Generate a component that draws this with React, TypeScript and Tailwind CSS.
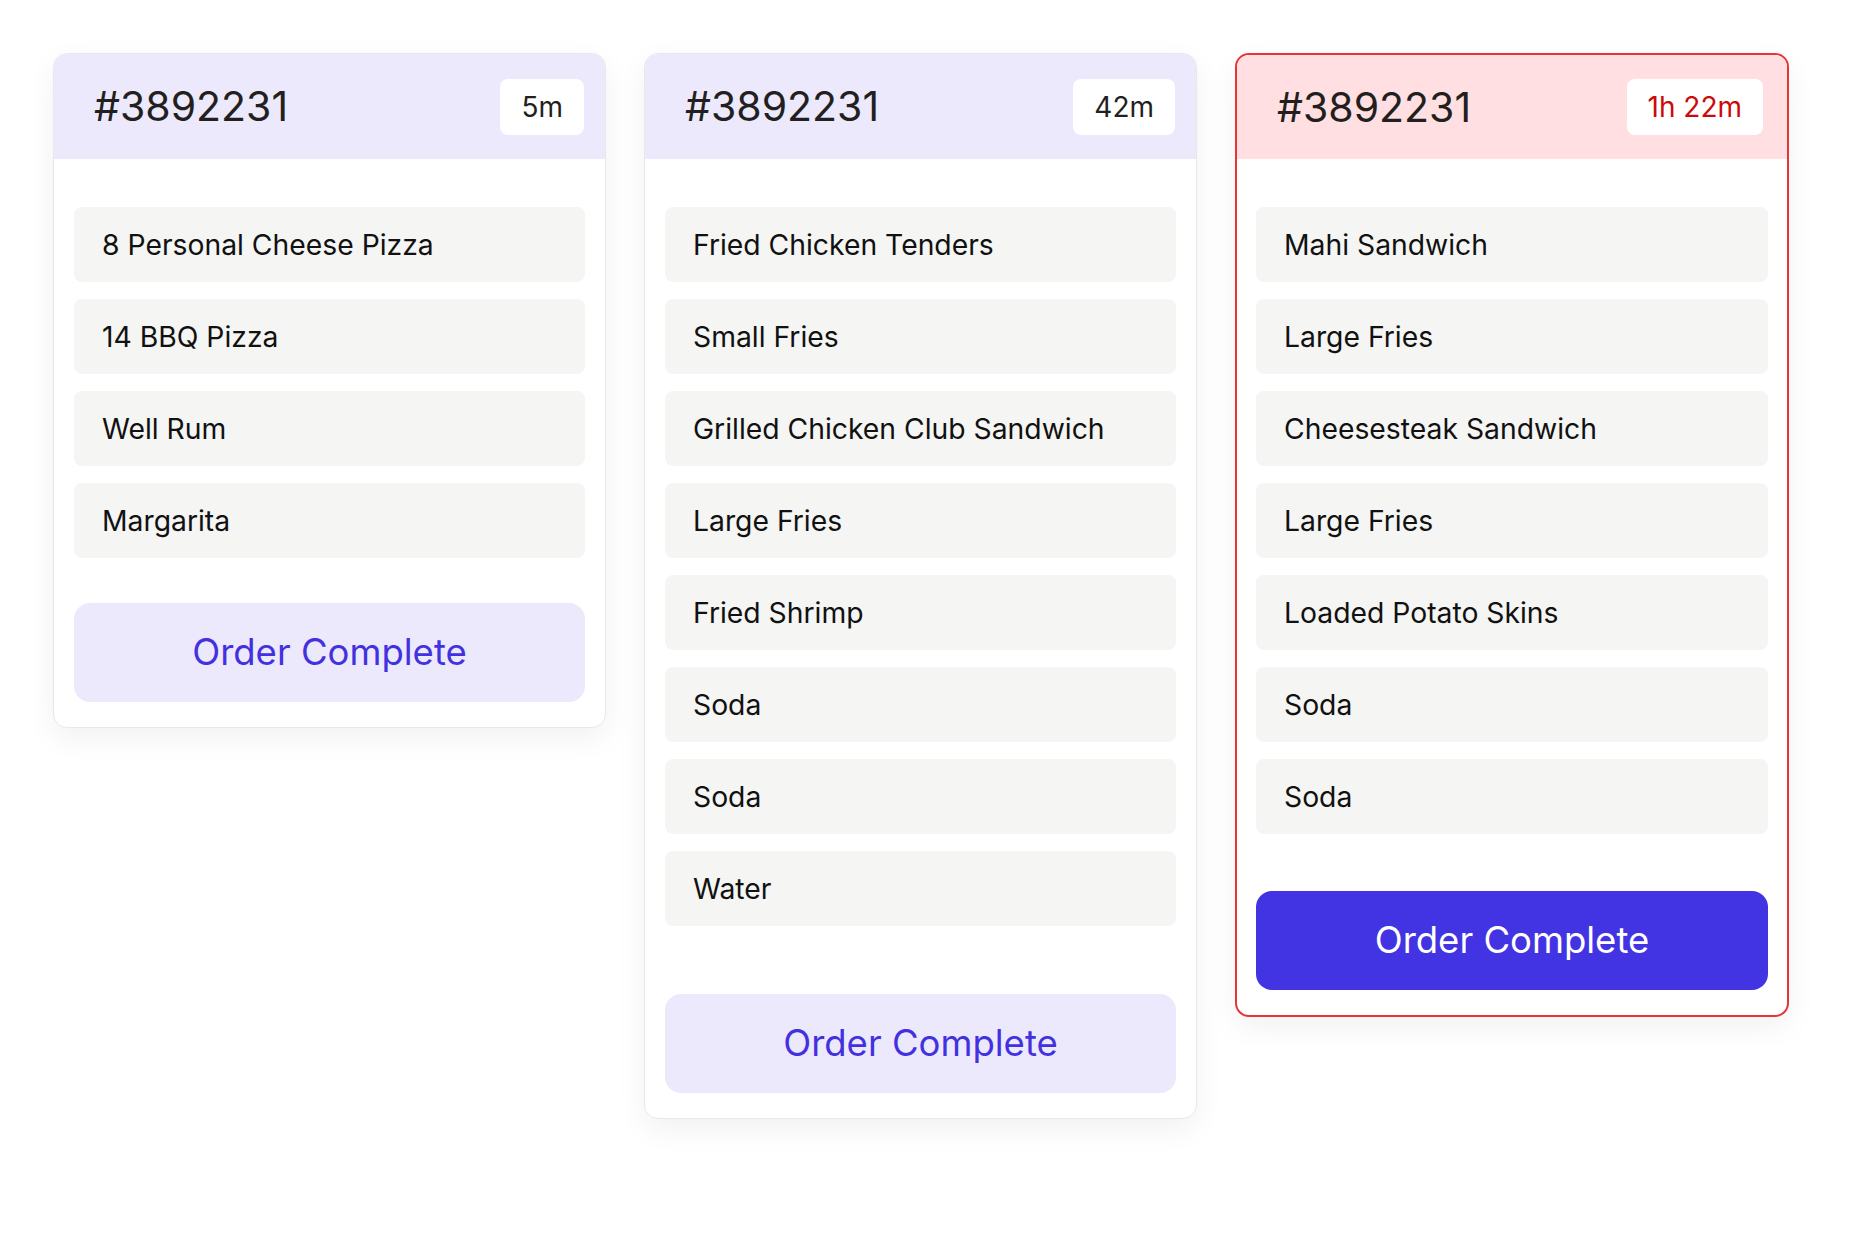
import React from "react";

type Order = {
  id: string;
  time: string;
  items: string[];
  urgent?: boolean;
  gap: string;
};

const orders: Order[] = [
  {
    id: "#3892231",
    time: "5m",
    items: ["8 Personal Cheese Pizza", "14 BBQ Pizza", "Well Rum", "Margarita"],
    gap: "mt-[45px]",
  },
  {
    id: "#3892231",
    time: "42m",
    items: [
      "Fried Chicken Tenders",
      "Small Fries",
      "Grilled Chicken Club Sandwich",
      "Large Fries",
      "Fried Shrimp",
      "Soda",
      "Soda",
      "Water",
    ],
    gap: "mt-[68px]",
  },
  {
    id: "#3892231",
    time: "1h 22m",
    urgent: true,
    items: [
      "Mahi Sandwich",
      "Large Fries",
      "Cheesesteak Sandwich",
      "Large Fries",
      "Loaded Potato Skins",
      "Soda",
      "Soda",
    ],
    gap: "mt-[57px]",
  },
];

function Card({ order }: { order: Order }) {
  const u = order.urgent;
  return (
    <div
      className={
        "overflow-hidden rounded-[14px] bg-white shadow-[0_10px_30px_rgba(0,0,0,0.06)] " +
        (u ? "w-[554px] border-2 border-[#e53535]" : "w-[553px] border border-[#e8e8e8]")
      }
    >
      <div
        className={
          "flex items-center justify-between pl-[40px] " +
          (u ? "h-[104px] bg-[#ffdfe1] pr-[24px]" : "h-[105px] bg-[#ece9fc] pr-[21px]")
        }
      >
        <span className="text-[41px] leading-none text-[#231f1e]">{order.id}</span>
        <span
          className={
            "flex h-[56px] items-center rounded-[8px] bg-white px-[21px] text-[28px] leading-none " +
            (u ? "text-[#cc0a0a]" : "text-[#231f1e]")
          }
        >
          {order.time}
        </span>
      </div>
      <div className={"flex flex-col pb-[25px] pt-[48px] " + (u ? "px-[19px]" : "px-[20px]")}>
        <div className="flex flex-col gap-[17px]">
          {order.items.map((it, i) => (
            <div
              key={i}
              className="flex h-[75px] items-center rounded-[8px] bg-[#f5f5f4] pl-[28px] pt-[2px] text-[28.3px] leading-none text-[#111111]"
            >
              {it}
            </div>
          ))}
        </div>
        <button
          className={
            order.gap +
            " flex h-[99px] w-full items-center justify-center rounded-[16px] text-[36.5px] leading-none " +
            (u ? "bg-[#4233e3] text-white" : "bg-[#ece9fc] text-[#4331e0]")
          }
        >
          Order Complete
        </button>
      </div>
    </div>
  );
}

export default function App() {
  return (
    <div
      className="min-h-[1260px] w-full bg-white"
      style={{ fontFamily: "Inter, 'Noto Sans', sans-serif" }}
    >
      <div className="flex items-start gap-[38px] pl-[53px] pt-[53px]">
        {orders.map((o, i) => (
          <Card key={i} order={o} />
        ))}
      </div>
    </div>
  );
}
